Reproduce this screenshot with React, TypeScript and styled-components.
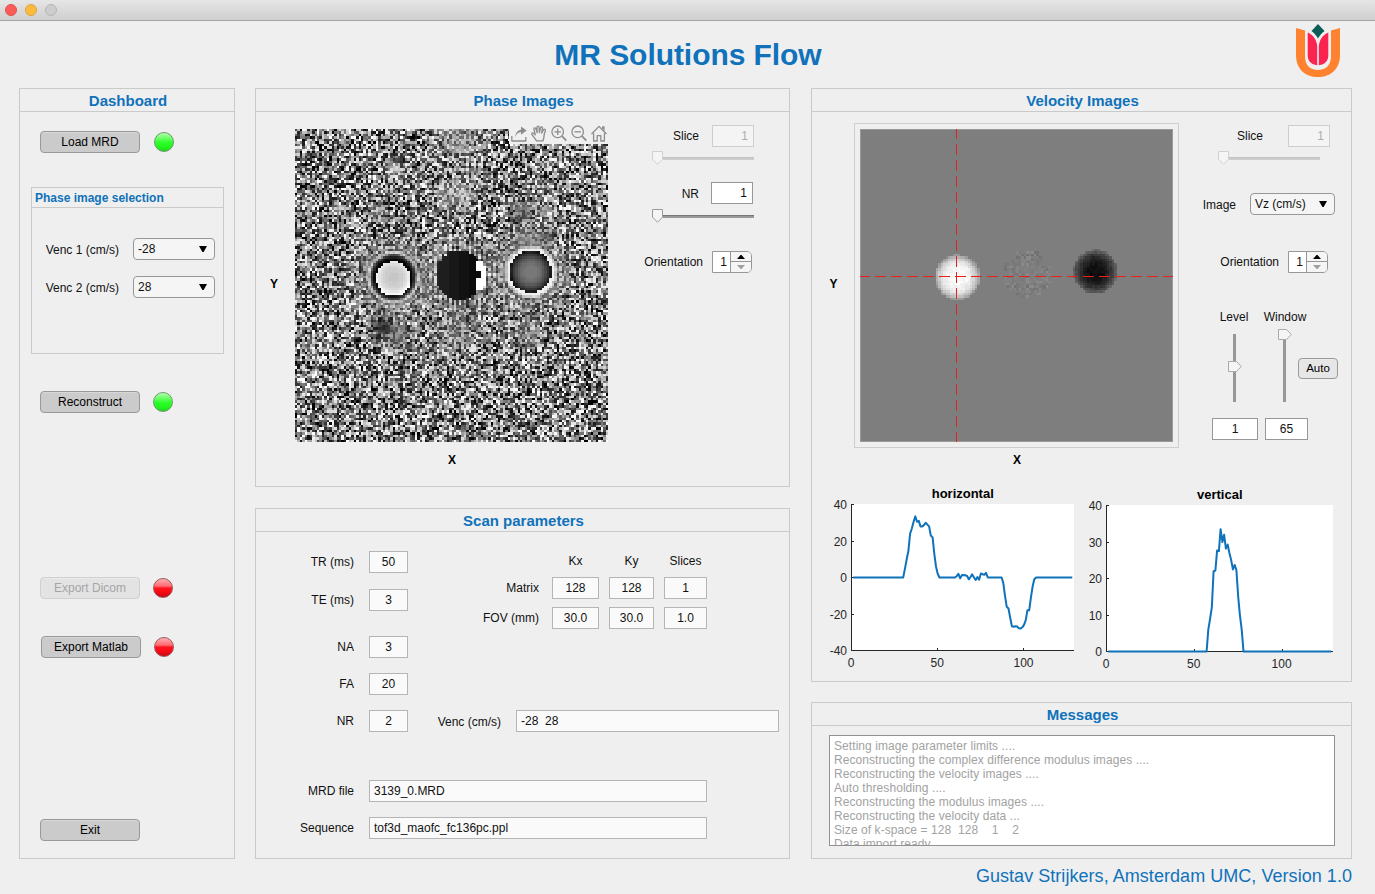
import React from "react";
import styled, { createGlobalStyle } from "styled-components";

const BLUE = "#0f72ba";

const GlobalStyle = createGlobalStyle`
  * { box-sizing: border-box; }
  body {
    margin: 0;
    background: #efefef;
    font-family: "Liberation Sans", Arial, sans-serif;
    font-size: 12px;
    line-height: 14px;
    color: #111;
    overflow: hidden;
  }
`;

/* ---------- window and panels ---------- */

const Window = styled.div`
  width: 1375px;
  height: 894px;
  display: flex;
  flex-direction: column;
  background: #efefef;
`;

const TitleBar = styled.div`
  height: 21px;
  flex: none;
  display: flex;
  align-items: center;
  gap: 8px;
  padding: 0 0 1px 5px;
  background: linear-gradient(#e6e6e6, #cfcfcf);
  border-bottom: 1px solid #a3a3a3;
`;

const TrafficLight = styled.span<{ $fill: string; $edge: string }>`
  width: 12px;
  height: 12px;
  border-radius: 50%;
  background: ${(p) => p.$fill};
  border: 1px solid ${(p) => p.$edge};
`;

const Header = styled.header`
  height: 67px;
  flex: none;
  display: grid;
  grid-template-columns: 1fr auto 1fr;
  padding: 0 35px 0 36px;
`;

const AppTitle = styled.h1`
  grid-column: 2;
  margin: 17px 0 0;
  font-size: 30px;
  line-height: 34px;
  font-weight: bold;
  letter-spacing: -0.06px;
  color: ${BLUE};
`;

const LogoSlot = styled.div`
  justify-self: end;
  padding-top: 3px;
`;

const Columns = styled.main`
  display: flex;
  height: 771px;
  padding-left: 19px;
`;

const Column = styled.div<{ $width: number; $left?: number; $gap?: number }>`
  width: ${(p) => p.$width}px;
  margin-left: ${(p) => p.$left ?? 0}px;
  display: flex;
  flex-direction: column;
  gap: ${(p) => p.$gap ?? 0}px;
`;

const PanelFrame = styled.section<{ $height: number }>`
  height: ${(p) => p.$height}px;
  flex: none;
  border: 1px solid #cacaca;
  display: flex;
  flex-direction: column;
`;

const PanelTitle = styled.h2`
  height: 23px;
  flex: none;
  margin: 0;
  padding-left: 2px;
  border-bottom: 1px solid #cacaca;
  text-align: center;
  font-size: 15px;
  line-height: 24px;
  font-weight: bold;
  color: ${BLUE};
`;

const Footer = styled.footer`
  padding: 5px 23px 0 0;
  text-align: right;
  font-size: 18px;
  line-height: 24px;
  letter-spacing: 0.045px;
  color: ${BLUE};
`;

function Panel(props: { title: string; height: number; children: React.ReactNode }) {
  return (
    <PanelFrame $height={props.height}>
      <PanelTitle>{props.title}</PanelTitle>
      {props.children}
    </PanelFrame>
  );
}

/* ---------- controls ---------- */

const Row = styled.div<{ $top?: number; $left?: number; $gap?: number; $height?: number }>`
  height: ${(p) => p.$height ?? 22}px;
  flex: none;
  display: flex;
  align-items: center;
  gap: ${(p) => p.$gap ?? 13}px;
  margin-top: ${(p) => p.$top ?? 0}px;
  margin-left: ${(p) => p.$left ?? 0}px;
`;

const Label = styled.label<{ $width: number; $align?: string; $drop?: number }>`
  width: ${(p) => p.$width}px;
  flex: none;
  text-align: ${(p) => p.$align ?? "right"};
  white-space: nowrap;
  padding-top: ${(p) => p.$drop ?? 0}px;
`;

const Button = styled.button<{ $small?: boolean }>`
  width: ${(p) => (p.$small ? 40 : 100)}px;
  height: ${(p) => (p.$small ? 21 : 22)}px;
  flex: none;
  padding: 0;
  font: inherit;
  font-size: ${(p) => (p.$small ? 11.5 : 12)}px;
  line-height: 14px;
  padding-bottom: ${(p) => (p.$small ? 1 : 0)}px;
  color: #000;
  background: ${(p) => (p.$small ? "#e6e6e6" : "#cbcbcb")};
  border: 1px solid #999;
  border-radius: 4px;
  box-shadow: inset 0 1px 0 rgba(255, 255, 255, 0.25);
  &:disabled {
    color: #a5a5a5;
    background: #e3e3e3;
    border-color: #d0d0d0;
  }
`;

const Lamp = styled.span<{ $on: boolean }>`
  width: 20px;
  height: 20px;
  flex: none;
  border-radius: 50%;
  border: 1px solid ${(p) => (p.$on ? "#6f9a6f" : "#98595b")};
  background: ${(p) =>
    p.$on
      ? "linear-gradient(#b4ffb0 0%, #5cff58 35%, #2aff26 55%, #22f21e 80%, #1fd81c 100%)"
      : "linear-gradient(#ffb0b4 0%, #ff6a70 40%, #ff1420 50%, #f80a16 72%, #c80812 100%)"};
`;

const GroupBox = styled.fieldset`
  width: 193px;
  height: 167px;
  margin: 34px 0 0 11px;
  padding: 0;
  border: 1px solid #cacaca;
`;

const GroupTitle = styled.div`
  height: 20px;
  padding-left: 3px;
  border-bottom: 1px solid #cacaca;
  font-weight: bold;
  line-height: 20px;
  color: ${BLUE};
`;

const Dropdown = styled.div<{ $width: number }>`
  width: ${(p) => p.$width}px;
  height: 22px;
  flex: none;
  display: flex;
  align-items: center;
  justify-content: space-between;
  padding: 0 7px 1px 4px;
  background: #f5f5f5;
  border: 1px solid #979797;
  border-radius: 4px;
`;

function Select(props: { value: string; width: number }) {
  return (
    <Dropdown $width={props.width}>
      {props.value}
      <svg width="8" height="6" viewBox="0 0 8 6"><path d="M0 0h8L4.6 6H3.4z" fill="#000" /></svg>
    </Dropdown>
  );
}

const Field = styled.div<{ $width: number; $kind?: "edit" | "number" | "disabled" | "text" }>`
  width: ${(p) => p.$width}px;
  height: 22px;
  flex: none;
  white-space: pre;
  line-height: 20px;
  border: 1px solid ${(p) => (p.$kind === "disabled" ? "#cecece" : p.$kind === "edit" || p.$kind === "number" ? "#979797" : "#b5b5b5")};
  background: ${(p) => (p.$kind === "disabled" ? "#f4f4f4" : p.$kind === "edit" || p.$kind === "number" ? "#fff" : "#fafafa")};
  color: ${(p) => (p.$kind === "disabled" ? "#ababab" : "#111")};
  text-align: ${(p) => (p.$kind === "disabled" || p.$kind === "number" ? "right" : p.$kind === "text" ? "left" : "center")};
  padding: 0 ${(p) => (p.$kind === "disabled" || p.$kind === "number" ? 5 : 0)}px 0 ${(p) => (p.$kind === "text" ? 4 : 0)}px;
`;

const SliderRow = styled.div<{ $top: number; $left: number }>`
  width: 102px;
  height: 15px;
  flex: none;
  display: flex;
  align-items: center;
  margin: ${(p) => p.$top}px 0 0 ${(p) => p.$left}px;
  svg { margin-bottom: 1px; }
`;

const Track = styled.div<{ $off?: boolean }>`
  height: 3px;
  flex: 1;
  background: ${(p) => (p.$off ? "#cdcdcd" : "#989898")};
  border-top: 1px solid ${(p) => (p.$off ? "#c2c2c2" : "#777")};
`;

function Slider(props: { top: number; left: number; disabled?: boolean }) {
  return (
    <SliderRow $top={props.top} $left={props.left}>
      <svg width="11" height="14" viewBox="0 0 11 14">
        <path d="M.5.5h10v7.7l-5 5-5-5z" fill="#f5f5f5" stroke={props.disabled ? "#d0d0d0" : "#999"} />
      </svg>
      <Track $off={props.disabled} />
    </SliderRow>
  );
}

const VerticalSliderBox = styled.div<{ $inset: number }>`
  width: 14px;
  height: 73px;
  padding-top: ${(p) => p.$inset}px;
  display: flex;
  flex-direction: column;
  svg { flex: none; }
`;

const VerticalTrack = styled.div<{ $length: number }>`
  width: 3px;
  height: ${(p) => p.$length}px;
  margin-left: 5px;
  background: #989898;
`;

function VerticalSlider(props: { inset: number; above: number; below: number }) {
  return (
    <VerticalSliderBox $inset={props.inset}>
      <VerticalTrack $length={props.above} />
      <svg width="14" height="11" viewBox="0 0 14 11">
        <path d="M.5.5h8l4.8 5-4.8 5h-8z" fill="#f5f5f5" stroke="#aaa" />
      </svg>
      <VerticalTrack $length={props.below} />
    </VerticalSliderBox>
  );
}

const SpinnerBox = styled.div`
  width: 40px;
  height: 22px;
  flex: none;
  display: flex;
  border: 1px solid #979797;
  border-radius: 0 5px 5px 0;
  background: #fff;
`;

const SpinnerValue = styled.div`
  width: 18px;
  padding-right: 3px;
  text-align: right;
  line-height: 20px;
  border-right: 1px solid #979797;
`;

const SpinnerButtons = styled.div`
  flex: 1;
  display: grid;
  grid-template-rows: 1fr 1fr;
  background: #f5f5f5;
  border-radius: 0 4px 4px 0;
  svg { place-self: center; }
  div { display: grid; }
  div:first-child { border-bottom: 1px solid #979797; }
`;

function Spinner() {
  return (
    <SpinnerBox>
      <SpinnerValue>1</SpinnerValue>
      <SpinnerButtons>
        <div><svg width="8" height="4" viewBox="0 0 8 4"><path d="M0 4h8L4.5 0h-1z" fill="#000" /></svg></div>
        <div><svg width="8" height="4" viewBox="0 0 8 4"><path d="M0 0h8L4.5 4h-1z" fill="#a0a0a0" /></svg></div>
      </SpinnerButtons>
    </SpinnerBox>
  );
}

/* ---------- MR images ---------- */

const N = 128;

function makeRandom(seed: number) {
  let s = seed;
  return () => {
    s = (s + 0x6d2b79f5) | 0;
    let t = Math.imul(s ^ (s >>> 15), 1 | s);
    t = (t + Math.imul(t ^ (t >>> 7), 61 | t)) ^ t;
    return ((t ^ (t >>> 14)) >>> 0) / 4294967296;
  };
}

/* One path per grey level; every pixel is a unit square in it. */
function rasterPaths(value: (x: number, y: number) => number | null) {
  const levels = new Map<number, string>();
  for (let y = 0; y < N; y++) {
    for (let x = 0; x < N; x++) {
      const v = value(x, y);
      if (v === null) continue;
      const level = Math.max(0, Math.min(255, Math.round(v / 6) * 6));
      levels.set(level, (levels.get(level) ?? "") + `M${x} ${y}h1v1h-1z`);
    }
  }
  return [...levels].map(([level, d]) => (
    <path key={level} d={d} fill={`rgb(${level},${level},${level})`} />
  ));
}

const patches = [
  { x: 94, y: 34, r: 4.5, v: 100, k: 0.75 },
  { x: 36, y: 81, r: 4, v: 30, k: 0.9 },
  { x: 42, y: 85, r: 5, v: 120, k: 0.7 },
  { x: 67, y: 5, r: 8, v: 160, k: 0.55 },
  { x: 67, y: 27, r: 7, v: 165, k: 0.5 },
  { x: 34, y: 34, r: 3.5, v: 140, k: 0.5 },
  { x: 40, y: 16, r: 4, v: 200, k: 0.6 },
  { x: 103, y: 34, r: 3, v: 220, k: 0.6 },
  { x: 66, y: 84, r: 8, v: 140, k: 0.5 },
  { x: 95, y: 84, r: 6, v: 150, k: 0.5 },
  { x: 102, y: 44, r: 3.5, v: 90, k: 0.7 },
  { x: 94, y: 44, r: 4, v: 130, k: 0.6 },
];

const phaseRandom = makeRandom(3139);
const phaseImage = rasterPaths((x, y) => {
  const noise = phaseRandom() * 255;
  const px = x + 0.5;
  const py = y + 0.5;
  const d1 = Math.hypot(px - 40.2, py - 60.6);
  if (Math.hypot(px - 40.3, py - 61.4) < 7.1) return 200 + Math.pow(d1 / 7, 3) * 48;
  if (d1 < 9.2) return 5 + Math.max(0, d1 - 7.6) * 45;
  const e2 = Math.hypot((px - 67.2) / 9.6, (py - 59.8) / 10.3);
  if (px > 74.4 && px < 78.3 && py > 54 && py < 66 && e2 < 1.15) {
    return px < 76 && py > 58 && py < 61 ? 10 : 255;
  }
  if (e2 < 1) return 34 - (px - 58) * 1.5;
  const d3 = Math.hypot(px - 96.4, py - 58.4);
  if (d3 < 8.6) return 122 - Math.pow(d3 / 8.6, 2.5) * 108;
  if (d3 < 9.8) return 240;
  let v = noise;
  const d = Math.min(d1 - 9.2, d3 - 9.8);
  const w = Math.min(0.85, Math.exp(-d / 4));
  const ring = d1 < d3 ? d1 : d3;
  v = v * (1 - w) + (150 + 60 * Math.cos((ring - 10.2) * 2.7)) * w;
  if (e2 < 1.9) {
    const k = Math.min(0.5, (1.9 - e2) * 0.6);
    v = v * (1 - k) + (130 + (x % 2 ? 75 : -70)) * k;
  }
  for (const p of patches) {
    const k = p.k * Math.exp(-Math.pow(Math.hypot(px - p.x, py - p.y) / p.r, 2));
    v = v * (1 - k) + p.v * k;
  }
  return (v - 128) * 1.08 + 128;
});

const velocityRandom = makeRandom(136);
const velocityImage = rasterPaths((x, y) => {
  const n = velocityRandom() - 0.5;
  const px = x + 0.5;
  const py = y + 0.5;
  const d1 = Math.hypot(px - 39.8, py - 60.7);
  if (d1 < 9.3) return 250 - Math.pow(d1 / 9.3, 3.5) * 105 + n * 14;
  const d2 = Math.hypot(px - 68.4, py - 59.4);
  if (d2 < 9.9) return Math.abs(n) < 0.1 ? null : 126 + n * Math.abs(n) * 56;
  const d3 = Math.hypot(px - 96.2, py - 58.4);
  if (d3 < 9) return 12 + Math.pow(d3 / 9, 2.5) * 92 + n * 14;
  return null;
});

const Figure = styled.div`
  display: flex;
  flex-direction: column;
  align-items: center;
  margin-top: 17px;
`;

const ImageStack = styled.div`
  position: relative;
  width: 313px;
  height: 313px;
  flex: none;
  svg { display: block; }
`;

const AxesToolbar = styled.div`
  position: absolute;
  top: -4px;
  right: 0;
  width: 99px;
  height: 19px;
  padding: 0 1px 0 2px;
  display: flex;
  justify-content: space-between;
  align-items: flex-start;
  background: linear-gradient(transparent 4px, #efefef 4px);
`;

const VelocityFrame = styled.div`
  padding: 5px;
  margin-top: -6px;
  border: 1px solid #cecece;
`;

const AxisName = styled.div<{ $top?: number }>`
  margin-top: ${(p) => p.$top ?? 0}px;
  padding-left: 1px;
  font-weight: bold;
  color: #000;
`;

const AxisColumn = styled.div<{ $width: number; $right: number }>`
  width: ${(p) => p.$width}px;
  flex: none;
  display: flex;
  justify-content: center;
  padding: 165px ${(p) => p.$right}px 0 0;
`;

const Split = styled.div<{ $height: number }>`
  height: ${(p) => p.$height}px;
  flex: none;
  display: flex;
`;

const Controls = styled.div`
  flex: 1;
  display: flex;
  flex-direction: column;
`;

function ToolIcon(props: { children: React.ReactNode }) {
  return (
    <svg width="16" height="17" viewBox="0 0 16 17" fill="none" stroke="#8c8c8c" strokeWidth="1.3" strokeLinejoin="round">
      {props.children}
    </svg>
  );
}

function PhaseToolbar() {
  return (
    <AxesToolbar>
      <ToolIcon>
        <path d="M.8 11v5h14v-4" />
        <path d="M4.2 12C4.6 7.6 6.6 5.3 10 4.7V1.4l5.6 4.2-5.6 4.2V7C7.600 7.200 5.500 8.700 4.200 12z" fill="#8c8c8c" stroke="none" />
      </ToolIcon>
      <ToolIcon>
        <path d="M5.5 15.9C4.6 13.6 2.5 11.8 1 9.7.2 8.2 1.8 7.4 2.8 8.4l1.5 1.4L3 4.3c-.3-1.5 1.5-2 1.9-.6l1.3 4L6 2.3c0-1.7 2-1.7 2.1 0l.3 5.2L9.5 2.8c.4-1.5 2.2-1.1 1.9.5l-.7 4.9 1.8-3.4c.7-1.3 2.300-.5 1.800.9-1 2.800-1.200 4-1.400 6.200-.1 1.600-.7 2.600-.9 4z" />
      </ToolIcon>
      <ToolIcon>
        <circle cx="6.7" cy="6.8" r="5.8" />
        <path d="M6.7 3.5v6.6M3.4 6.8H10" />
        <path d="M11 11.2l4.3 4.5" strokeWidth="1.8" />
      </ToolIcon>
      <ToolIcon>
        <circle cx="6.7" cy="6.8" r="5.8" />
        <path d="M3.4 6.8H10" />
        <path d="M11 11.2l4.3 4.5" strokeWidth="1.8" />
      </ToolIcon>
      <ToolIcon>
        <path d="M.5 9L8 1.4 15.5 9M2.6 8.3V16h3.600v-5.300h3.600V16h3.600V8.300M13 5.600V1.800h-1.400v2" />
      </ToolIcon>
    </AxesToolbar>
  );
}

/* ---------- profile plots ---------- */

type Point = [number, number];

const horizontalProfile: Point[] = [
  [1, 0], [30, 0], [31, 5], [32, 10], [33, 14.5], [34, 24], [35, 27], [36, 30.5], [37, 33.5], [38, 30.5], [39, 31],
  [40, 28], [41, 28], [42, 28.7], [43, 30], [44, 29], [45, 28], [46, 23], [47, 22], [48, 13], [49, 6], [50, 2],
  [51, 0], [60, 0], [61, 0.7], [62, 2], [63, -0.5], [64, 1.3], [66, 1.2], [67, 0.8], [68, -1], [69, 0.3],
  [70, 1.7], [71, 0], [72, -1.3], [73, 0.2], [74, -1.2], [75, 2.2], [76, 1.8], [77, 1.5], [78, 2.6], [79, 0],
  [87, 0], [88, -3], [89, -10], [90, -16], [91, -17], [92, -22], [93, -26.7], [94, -27], [95, -26.7],
  [96, -26.8], [97, -27.8], [98, -28], [99, -27.3], [100, -26], [101, -23.5], [102, -18], [103, -18],
  [104, -11], [105, -5], [106, -1], [107, 0], [128, 0],
];

const verticalProfile: Point[] = [
  [1, 0], [57, 0], [58, 6], [59, 9], [60, 12], [61, 22], [62, 22.2], [63, 27.7], [64, 27.5], [65, 33.5],
  [66, 30], [67, 32], [68, 28.2], [69, 29.3], [70, 27], [71, 25], [72, 22.5], [73, 23.7], [74, 22.3],
  [75, 15], [76, 10], [77, 6], [78, 0], [128, 0],
];

const PlotRow = styled.div`
  display: flex;
  margin-left: 10px;
  svg { display: block; }
  text { font-size: 12px; fill: #262626; }
  text.title { font-size: 13px; font-weight: bold; fill: #000; }
`;

function Plot(props: {
  title: string; left: number; top: number; width: number; height: number;
  min: number; ticks: number[]; data: Point[];
}) {
  const { left, top, width, height, min } = props;
  const sx = (x: number) => left + (x / 129) * width;
  const sy = (y: number) => top + ((40 - y) / (40 - min)) * height;
  const bottom = top + height;
  return (
    <svg width="256" height="190" viewBox="0 0 256 190">
      <rect x={left} y={top - 0.5} width={width} height={height} fill="#fff" />
      <text className="title" x={left + width / 2} y={top - 7} textAnchor="middle">{props.title}</text>
      <path d={`M${left} ${top - 0.5}V${bottom}H${left + width}`} fill="none" stroke="#262626" />
      {props.ticks.map((t) => (
        <g key={t}>
          <path d={`M${left} ${Math.floor(sy(t)) + 0.5}h2.5`} stroke="#262626" />
          <text x={left - 4.5} y={sy(t) + 4.8} textAnchor="end">{t}</text>
        </g>
      ))}
      {[0, 50, 100].map((t) => (
        <g key={t}>
          <path d={`M${Math.floor(sx(t)) + 0.5} ${bottom}v-2.5`} stroke="#262626" />
          <text x={sx(t) - 0.5} y={bottom + 16.5} textAnchor="middle">{t}</text>
        </g>
      ))}
      <polyline
        points={props.data.map(([x, y]) => `${sx(x).toFixed(1)},${sy(y).toFixed(1)}`).join(" ")}
        fill="none" stroke="#0f72ba" strokeWidth="2" strokeLinejoin="round"
      />
    </svg>
  );
}

/* ---------- scan parameters ---------- */

const ScanTop = styled.div`
  display: flex;
  height: 170px;
`;

const ParameterList = styled.div`
  width: 152px;
  flex: none;
`;

const GeometryGrid = styled.div`
  display: grid;
  grid-template-columns: 131px 47px 45px 43px;
  grid-template-rows: 14px 22px 22px;
  column-gap: 10px;
  row-gap: 8px;
  align-content: start;
  align-items: center;
  padding: 23px 0 0 3px;
  text-align: center;
`;

const GridLabel = styled.span`
  text-align: right;
  padding-right: 3px;
`;

const GridHead = styled.span`
  margin-top: -3px;
`;

/* ---------- messages ---------- */

const MessageBox = styled.div`
  width: 506px;
  height: 111px;
  margin: 9px 0 0 17px;
  padding: 3px 4px;
  overflow: hidden;
  white-space: pre;
  letter-spacing: 0.07px;
  background: #fff;
  border: 1px solid #929292;
  color: #a2a2a2;
`;

const messages = [
  "Setting image parameter limits ....",
  "Reconstructing the complex difference modulus images ....",
  "Reconstructing the velocity images ....",
  "Auto thresholding ....",
  "Reconstructing the modulus images ....",
  "Reconstructing the velocity data ...",
  "Size of k-space = 128  128    1    2",
  "Data import ready",
];

function Logo() {
  return (
    <svg width="44" height="54" viewBox="0 0 44 54">
      <path d="M0 4L9 6.500v25.500c0 9 5 14 13 14s13-5 13-14V6.500L44 4v27c0 14-9 22-22 22S0 45 0 31z" fill="#ff8230" />
      <path d="M11.700 8.500C17 11 21.200 16 21.200 23v18.200C15 40.500 11.700 37 11.700 31z" fill="#fb2350" />
      <path d="M32.300 8.500C27 11 22.800 16 22.800 23v18.200c6.200-.7 9.500-4.200 9.500-10.200z" fill="#fb2350" />
      <path d="M22 0l6.500 7c-2.500 2-4.700 4.300-6.500 7.500-1.800-3.200-4-5.500-6.500-7.500z" fill="#0b5d57" />
    </svg>
  );
}

const SideBySide = styled.div<{ $top: number; $left: number; $gap: number }>`
  display: flex;
  gap: ${(p) => p.$gap}px;
  margin: ${(p) => p.$top}px 0 0 ${(p) => p.$left}px;
`;

const AutoSlot = styled.div`
  padding-top: 29px;
  margin-left: -30px;
`;

export default function App() {
  return (
    <Window>
      <GlobalStyle />
      <TitleBar>
        <TrafficLight $fill="#fc5b57" $edge="#e2504c" />
        <TrafficLight $fill="#fdbb3d" $edge="#e0a236" />
        <TrafficLight $fill="#cdcdcd" $edge="#b5b5b5" />
      </TitleBar>
      <Header>
        <AppTitle>MR Solutions Flow</AppTitle>
        <LogoSlot><Logo /></LogoSlot>
      </Header>

      <Columns>
        <Column $width={216}>
          <Panel title="Dashboard" height={771}>
            <Row $top={19} $left={20} $gap={14}><Button>Load MRD</Button><Lamp $on /></Row>
            <GroupBox>
              <GroupTitle>Phase image selection</GroupTitle>
              <Row $top={30} $left={1} $gap={14}>
                <Label $width={86} $drop={1}>Venc 1 (cm/s)</Label><Select value="-28" width={82} />
              </Row>
              <Row $top={16} $left={1} $gap={14}>
                <Label $width={86} $drop={1}>Venc 2 (cm/s)</Label><Select value="28" width={82} />
              </Row>
            </GroupBox>
            <Row $top={37} $left={20}><Button>Reconstruct</Button><Lamp $on /></Row>
            <Row $top={164} $left={20}><Button disabled>Export Dicom</Button><Lamp $on={false} /></Row>
            <Row $top={37} $left={21}><Button>Export Matlab</Button><Lamp $on={false} /></Row>
            <Row $top={161} $left={20}><Button>Exit</Button></Row>
          </Panel>
        </Column>

        <Column $width={535} $left={20} $gap={21}>
          <Panel title="Phase Images" height={399}>
            <Split $height={375}>
              <AxisColumn $width={39} $right={4}><AxisName>Y</AxisName></AxisColumn>
              <Figure>
                <ImageStack>
                  <svg width="313" height="313" viewBox="0 0 128 128" shapeRendering="crispEdges">{phaseImage}</svg>
                  <PhaseToolbar />
                </ImageStack>
                <AxisName $top={11}>X</AxisName>
              </Figure>
              <Controls>
                <Row $top={13}><Label $width={91}>Slice</Label><Field $width={42} $kind="disabled">1</Field></Row>
                <Slider top={4} left={44} disabled />
                <Row $top={16} $gap={12}><Label $width={91} $drop={1}>NR</Label><Field $width={42} $kind="number">1</Field></Row>
                <Slider top={5} left={44} />
                <Row $top={27} $gap={9}><Label $width={95}>Orientation</Label><Spinner /></Row>
              </Controls>
            </Split>
          </Panel>

          <Panel title="Scan parameters" height={351}>
            <ScanTop>
              <ParameterList>
                <Row $top={19} $gap={15}><Label $width={98}>TR (ms)</Label><Field $width={39}>50</Field></Row>
                <Row $top={16} $gap={15}><Label $width={98}>TE (ms)</Label><Field $width={39}>3</Field></Row>
                <Row $top={25} $gap={15}><Label $width={98}>NA</Label><Field $width={39}>3</Field></Row>
                <Row $top={15} $gap={15}><Label $width={98}>FA</Label><Field $width={39}>20</Field></Row>
              </ParameterList>
              <GeometryGrid>
                <span /><GridHead>Kx</GridHead><GridHead>Ky</GridHead><GridHead>Slices</GridHead>
                <GridLabel>Matrix</GridLabel><Field $width={47}>128</Field><Field $width={45}>128</Field><Field $width={43}>1</Field>
                <GridLabel>FOV (mm)</GridLabel><Field $width={47}>30.0</Field><Field $width={45}>30.0</Field><Field $width={43}>1.0</Field>
              </GeometryGrid>
            </ScanTop>
            <Row $top={8} $gap={15}>
              <Label $width={98}>NR</Label><Field $width={39}>2</Field>
              <Label $width={78} $drop={2}>Venc (cm/s)</Label><Field $width={263} $kind="text">-28  28</Field>
            </Row>
            <Row $top={48} $gap={15}><Label $width={98}>MRD file</Label><Field $width={338} $kind="text">3139_0.MRD</Field></Row>
            <Row $top={15} $gap={15}><Label $width={98}>Sequence</Label><Field $width={338} $kind="text">tof3d_maofc_fc136pc.ppl</Field></Row>
          </Panel>
        </Column>

        <Column $width={541} $left={21} $gap={20}>
          <Panel title="Velocity Images" height={594}>
            <Split $height={372}>
              <AxisColumn $width={42} $right={0}><AxisName>Y</AxisName></AxisColumn>
              <Figure>
                <VelocityFrame>
                  <ImageStack>
                    <svg width="313" height="313" viewBox="0 0 313 313">
                      <rect x=".5" y=".5" width="312" height="312" fill="#7e7e7e" stroke="#999" />
                      <g transform="scale(2.4453)" shapeRendering="crispEdges">{velocityImage}</g>
                      <path d="M0 147.500h313M96.500 0v313" stroke="#e6201f" strokeDasharray="11 5" strokeDashoffset="1" />
                    </svg>
                  </ImageStack>
                </VelocityFrame>
                <AxisName $top={5}>X</AxisName>
              </Figure>
              <Controls>
                <Row $top={13} $gap={25}><Label $width={84}>Slice</Label><Field $width={42} $kind="disabled">1</Field></Row>
                <Slider top={4} left={39} disabled />
                <Row $top={27} $gap={14}><Label $width={57} $drop={2}>Image</Label><Select value="Vz (cm/s)" width={85} /></Row>
                <Row $top={36} $gap={9}><Label $width={100}>Orientation</Label><Spinner /></Row>
                <Row $top={37} $height={14} $gap={0} $left={34}>
                  <Label $width={42} $align="center">Level</Label>
                  <Label $width={60} $align="center">Window</Label>
                </Row>
                <SideBySide $top={5} $left={49} $gap={36}>
                  <VerticalSlider inset={5} above={27} below={30} />
                  <VerticalSlider inset={0} above={0} below={62} />
                  <AutoSlot><Button $small>Auto</Button></AutoSlot>
                </SideBySide>
                <Row $top={16} $left={33} $gap={7}>
                  <Field $width={46} $kind="edit">1</Field>
                  <Field $width={43} $kind="edit">65</Field>
                </Row>
              </Controls>
            </Split>
            <PlotRow>
              <Plot title="horizontal" left={29.5} top={20.5} width={222.5} height={146} min={-40} ticks={[40, 20, 0, -20, -40]} data={horizontalProfile} />
              <Plot title="vertical" left={28.5} top={21.5} width={226.5} height={146} min={0} ticks={[40, 30, 20, 10, 0]} data={verticalProfile} />
            </PlotRow>
          </Panel>

          <Panel title="Messages" height={157}>
            <MessageBox>
              {messages.map((m) => <div key={m}>{m}</div>)}
            </MessageBox>
          </Panel>
        </Column>
      </Columns>
      <Footer>Gustav Strijkers, Amsterdam UMC, Version 1.0</Footer>
    </Window>
  );
}
